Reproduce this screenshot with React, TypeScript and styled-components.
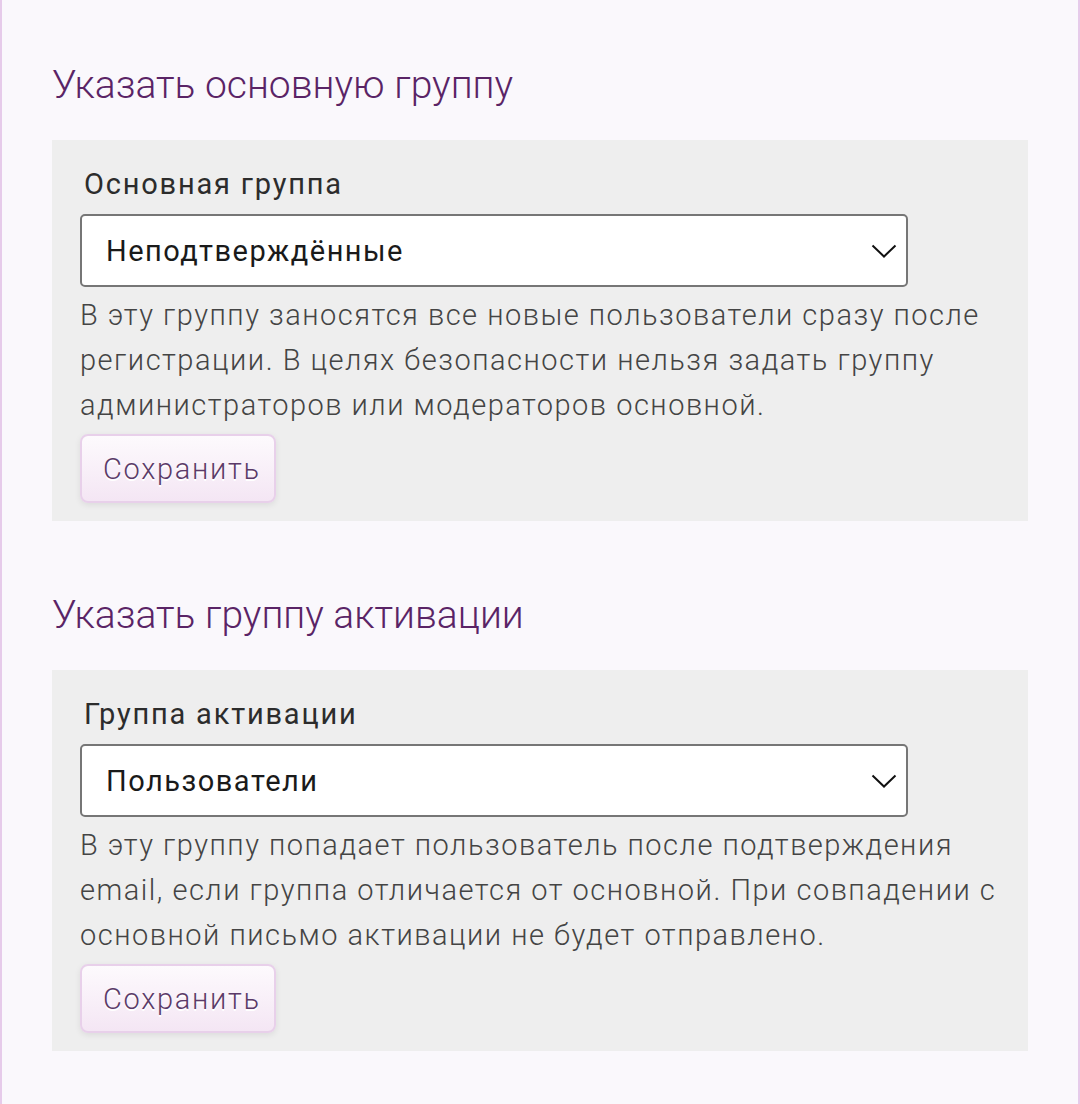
import React from "react";
import styled, { createGlobalStyle } from "styled-components";

const Global = createGlobalStyle`
  html, body { margin: 0; padding: 0; background: #faf8fc; }
  body { font-family: Roboto, "Noto Sans", sans-serif; }
  * { box-sizing: border-box; }
`;

const Page = styled.div`
  min-height: 1104px;
  background: #faf8fc;
  border-left: 2px solid #e6cbea;
  border-right: 2px solid #e6cbea;
  padding: 62px 50px 0 50px;
  display: flex;
  flex-direction: column;
`;

const Section = styled.section`
  display: flex;
  flex-direction: column;
  & + & { margin-top: 71px; }
`;

const Heading = styled.h2`
  margin: 0 0 32px 0;
  font-size: 39px;
  line-height: 46px;
  font-weight: 300;
  color: #5a2466;
`;

const Panel = styled.div`
  background: #eeeeee;
  padding: 22px 28px 18px 28px;
  display: flex;
  flex-direction: column;
  align-items: flex-start;
`;

const Label = styled.label`
  font-size: 29px;
  letter-spacing: 1.8px;
  line-height: 45px;
  font-weight: 400;
  color: #2c2c2c;
  padding-left: 4px;
  margin-bottom: 7px;
`;

const SelectBox = styled.div`
  position: relative;
  width: 828px;
  height: 73px;
  background: #ffffff;
  border: 2px solid #767676;
  border-radius: 5px;
  display: flex;
  align-items: center;
  padding: 0 24px;
  font-size: 29px;
  letter-spacing: 1.5px;
  font-weight: 400;
  color: #1a1a1a;
`;

const SelectText = styled.span`
  flex: 1;
`;

const Chevron = styled.svg`
  width: 26px;
  height: 14px;
  margin-right: -15px;
`;

const Help = styled.p`
  margin: 6px 0 6px 0;
  font-size: 29px;
  letter-spacing: 1.5px;
  line-height: 45px;
  font-weight: 300;
  color: #444444;
  max-width: 930px;
`;

const Button = styled.button`
  height: 69px;
  padding: 0 13px 0 21px;
  font-family: Roboto, "Noto Sans", sans-serif;
  font-size: 29px;
  letter-spacing: 1.7px;
  font-weight: 300;
  color: #5b3a68;
  text-shadow: 0 2px 0 #ffffff;
  background: linear-gradient(to bottom, #fdfafd, #f4e6f4);
  border: 2px solid #e8d0ea;
  border-radius: 8px;
  box-shadow: 0 2px 6px rgba(0, 0, 0, 0.08);
  cursor: pointer;
`;

type Block = { title: string; label: string; value: string; help: string };

const blocks: Block[] = [
  {
    title: "Указать основную группу",
    label: "Основная группа",
    value: "Неподтверждённые",
    help:
      "В эту группу заносятся все новые пользователи сразу после регистрации. В целях безопасности нельзя задать группу администраторов или модераторов основной.",
  },
  {
    title: "Указать группу активации",
    label: "Группа активации",
    value: "Пользователи",
    help:
      "В эту группу попадает пользователь после подтверждения email, если группа отличается от основной. При совпадении с основной письмо активации не будет отправлено.",
  },
];

export default function App() {
  return (
    <>
      <Global />
      <Page>
        {blocks.map((b) => (
          <Section key={b.title}>
            <Heading>{b.title}</Heading>
            <Panel>
              <Label>{b.label}</Label>
              <SelectBox>
                <SelectText>{b.value}</SelectText>
                <Chevron viewBox="0 0 26 14" fill="none">
                  <path d="M1.5 1.5 L13 12.5 L24.5 1.5" stroke="#111" strokeWidth="2" />
                </Chevron>
              </SelectBox>
              <Help>{b.help}</Help>
              <Button>Сохранить</Button>
            </Panel>
          </Section>
        ))}
      </Page>
    </>
  );
}
